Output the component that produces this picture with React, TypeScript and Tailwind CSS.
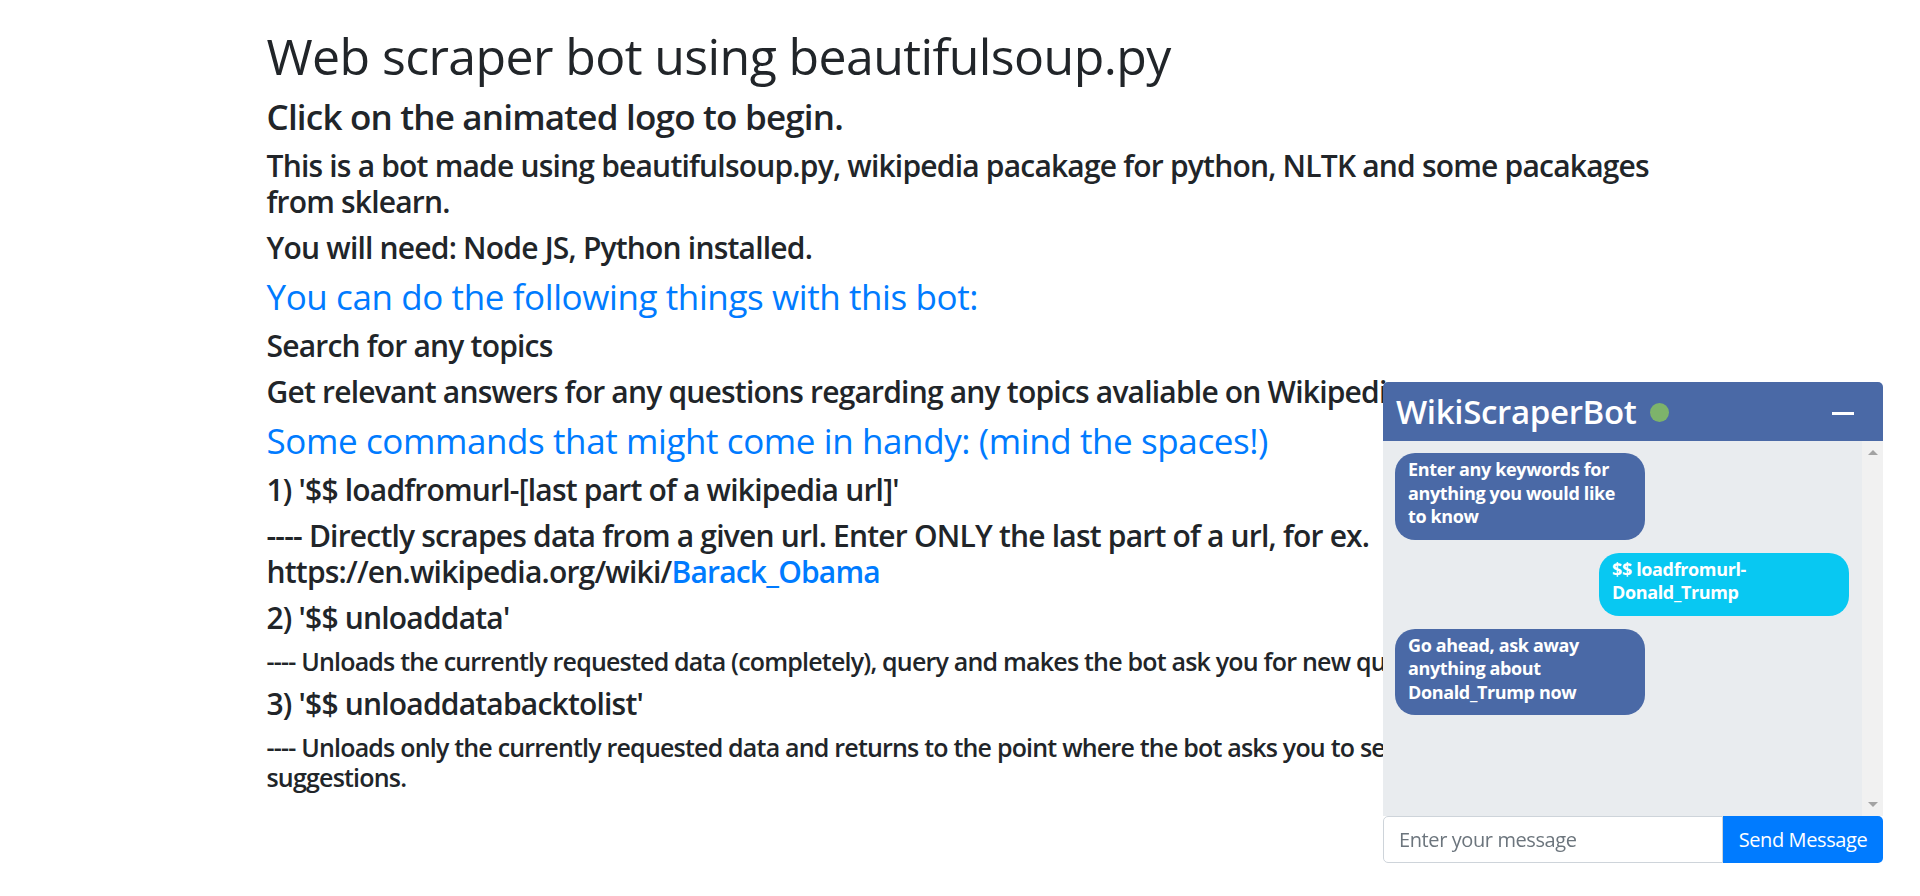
import { useState } from 'react';

const BUBBLE_BOT = 'bg-[#4a69a6]';
const BUBBLE_USER = 'bg-[#08c8f2]';

function ChatWidget() {
  const [msg, setMsg] = useState('');

  return (
    <div className="fixed bottom-[33px] right-[37px] flex w-[500px] flex-col font-['Open_Sans',sans-serif]">
      {/* header */}
      <div className="flex h-[59px] items-center rounded-t-[5px] bg-[#4a69a6] pl-[13px] pr-[29px]">
        <span className="text-[33px] font-semibold leading-none tracking-[-0.33px] text-white">WikiScraperBot</span>
        <span className="ml-[13px] mt-[2px] h-[19px] w-[19px] rounded-full bg-[#7db36b]" />
        <span className="ml-auto mt-[4px] h-[3px] w-[22px] bg-white" />
      </div>

      {/* messages */}
      <div className="flex h-[375px] bg-[#e9ecef]">
        <div className="flex flex-1 flex-col gap-[13px] px-[12px] pt-[12px] text-[18px] font-bold leading-[23.5px] tracking-[-0.36px] text-white">
          <div className={`w-[250px] rounded-[20px] ${BUBBLE_BOT} px-[13px] pb-[11px] pt-[5px]`}>
            Enter any keywords for
            <br />
            anything you would like
            <br />
            to know
          </div>
          <div className={`ml-auto mr-[1px] w-[250px] rounded-[20px] ${BUBBLE_USER} px-[13px] pb-[11px] pt-[5px]`}>
            $$ loadfromurl-
            <br />
            Donald_Trump
          </div>
          <div className={`w-[250px] rounded-[20px] ${BUBBLE_BOT} px-[13px] pb-[11px] pt-[5px]`}>
            Go ahead, ask away
            <br />
            anything about
            <br />
            Donald_Trump now
          </div>
        </div>
        {/* scrollbar */}
        <div className="flex w-[21px] flex-col items-center justify-between bg-[#f1f1f1] py-[9px]">
          <span className="h-0 w-0 border-x-[5px] border-b-[5px] border-x-transparent border-b-[#a3a3a3]" />
          <span className="h-0 w-0 border-x-[5px] border-t-[5px] border-x-transparent border-t-[#a3a3a3]" />
        </div>
      </div>

      {/* input */}
      <div className="flex h-[47px]">
        <input
          value={msg}
          onChange={(e) => setMsg(e.target.value)}
          placeholder="Enter your message"
          className="min-w-0 flex-1 rounded-l-[5px] border border-[#ced4da] bg-white px-[15px] text-[20px] tracking-[-0.4px] text-[#495057] outline-none placeholder:text-[#6c757d]"
        />
        <button
          type="button"
          className="w-[160px] rounded-r-[5px] bg-[#007bff] text-[20px] tracking-[-0.4px] text-white"
        >
          Send Message
        </button>
      </div>
    </div>
  );
}

export default function App() {
  return (
    <div className="min-h-[896px] bg-white font-['Open_Sans',sans-serif] text-[#212529]">
      <div className="mx-auto w-[1387px] pt-[26px] font-semibold tracking-[-0.8px]">
        <h1 className="mb-[10px] text-[50px] font-normal leading-[60px] tracking-[-0.6px]">
          Web scraper bot using beautifulsoup.py
        </h1>
        <h3 className="mb-[10px] text-[35px] leading-[42px]">Click on the animated logo to begin.</h3>
        <h4 className="mb-[10px] text-[30px] leading-[36px]">
          This is a bot made using beautifulsoup.py, wikipedia pacakage for python, NLTK and some pacakages from
          sklearn.
        </h4>
        <h4 className="mb-[10px] text-[30px] leading-[36px]">You will need: Node JS, Python installed.</h4>

        <h3 className="mb-[10px] text-[35px] font-normal leading-[42px] tracking-[-0.4px] text-[#007bff]">
          You can do the following things with this bot:
        </h3>
        <h4 className="mb-[10px] text-[30px] leading-[36px]">Search for any topics</h4>
        <h4 className="mb-[10px] text-[30px] leading-[36px]">
          Get relevant answers for any questions regarding any topics avaliable on Wikipedia
        </h4>

        <h3 className="mb-[10px] text-[35px] font-normal leading-[42px] tracking-[-0.4px] text-[#007bff]">
          Some commands that might come in handy: (mind the spaces!)
        </h3>
        <h4 className="mb-[10px] text-[30px] leading-[36px]">1) '$$ loadfromurl-[last part of a wikipedia url]'</h4>
        <h4 className="mb-[10px] text-[30px] leading-[36px]">
          ---- Directly scrapes data from a given url. Enter ONLY the last part of a url, for ex.{' '}
          <span>
            https://en.wikipedia.org/wiki/<span className="text-[#007bff]">Barack_Obama</span>
          </span>
        </h4>
        <h4 className="mb-[10px] text-[30px] leading-[36px]">2) '$$ unloaddata'</h4>
        <h5 className="mb-[10px] text-[25px] leading-[30px]">
          ---- Unloads the currently requested data (completely), query and makes the bot ask you for new query.
        </h5>
        <h4 className="mb-[10px] text-[30px] leading-[36px]">3) '$$ unloaddatabacktolist'</h4>
        <h5 className="mb-[10px] text-[25px] leading-[30px]">
          ---- Unloads only the currently requested data and returns to the point where the bot asks you to select
          from the list of suggestions.
        </h5>
      </div>
      <ChatWidget />
    </div>
  );
}
